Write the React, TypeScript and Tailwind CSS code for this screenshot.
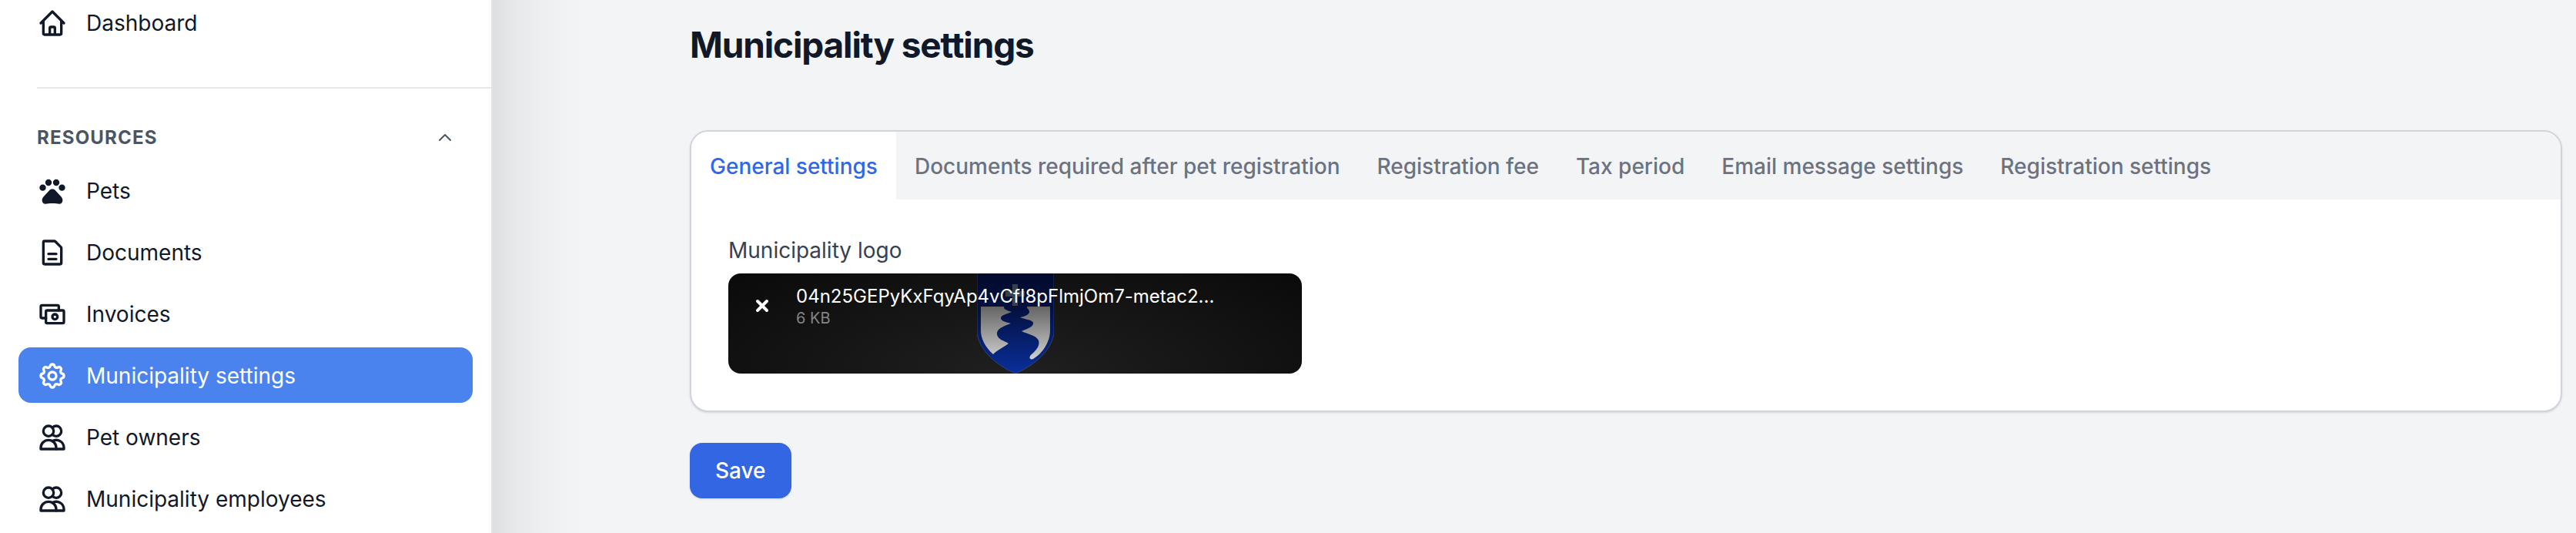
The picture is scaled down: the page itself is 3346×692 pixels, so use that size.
import React from 'react';

type IconProps = { className?: string };

const stroke = {
  viewBox: '0 0 24 24',
  fill: 'none',
  stroke: 'currentColor',
  strokeWidth: 2,
  strokeLinecap: 'round' as const,
  strokeLinejoin: 'round' as const,
  'aria-hidden': true,
};

const HomeIcon: React.FC<IconProps> = ({ className }) => (
  <svg {...stroke} className={className}>
    <path d="M3 12l9-9 9 9M5 10v10a1 1 0 0 0 1 1h12a1 1 0 0 0 1-1V10M10 21v-5a1 1 0 0 1 1-1h2a1 1 0 0 1 1 1v5" />
  </svg>
);

const PawIcon: React.FC<IconProps> = ({ className }) => (
  <svg viewBox="0 0 24 24" fill="currentColor" aria-hidden="true" className={className}>
    <circle cx="4.5" cy="9.4" r="2.5" />
    <circle cx="9" cy="5.4" r="2.5" />
    <circle cx="15" cy="5.4" r="2.5" />
    <circle cx="19.5" cy="9.4" r="2.5" />
    <path d="M12 10.5c1 0 1.8.4 2.5 1.2l4.3 4.6c.9 1 1.2 1.8 1.2 3 0 1.6-1.1 2.7-2.6 2.7-1.5 0-3-.4-5.4-.4s-3.9.4-5.4.4C5.1 22 4 20.9 4 19.3c0-1.2.3-2 1.2-3l4.3-4.6c.7-.8 1.5-1.2 2.5-1.2z" />
  </svg>
);

const DocumentIcon: React.FC<IconProps> = ({ className }) => (
  <svg {...stroke} className={className}>
    <path d="M5 20V4a1 1 0 0 1 1-1h7.59a1 1 0 0 1 .7.29l4.42 4.42a1 1 0 0 1 .29.7V20a1 1 0 0 1-1 1H6a1 1 0 0 1-1-1zM9 13h6M9 17h6" />
  </svg>
);

const MoneyIcon: React.FC<IconProps> = ({ className }) => (
  <svg {...stroke} className={className}>
    <path d="M17 9V6a1 1 0 0 0-1-1H4a1 1 0 0 0-1 1v8a1 1 0 0 0 1 1h3" />
    <rect x="7" y="9" width="14" height="10" rx="1" />
    <circle cx="14" cy="14" r="2" />
  </svg>
);

const CogIcon: React.FC<IconProps> = ({ className }) => (
  <svg {...stroke} className={className}>
    <path d="M10.33 4.32c.42-1.76 2.92-1.76 3.35 0a1.72 1.72 0 0 0 2.57 1.06c1.54-.94 3.31.83 2.37 2.37a1.72 1.72 0 0 0 1.06 2.57c1.76.43 1.76 2.93 0 3.36a1.72 1.72 0 0 0-1.06 2.57c.94 1.54-.83 3.31-2.37 2.37a1.72 1.72 0 0 0-2.57 1.06c-.43 1.76-2.93 1.76-3.35 0a1.72 1.72 0 0 0-2.58-1.06c-1.54.94-3.31-.83-2.37-2.37a1.72 1.72 0 0 0-1.06-2.57c-1.76-.43-1.76-2.93 0-3.36a1.72 1.72 0 0 0 1.06-2.57c-.94-1.54.83-3.31 2.37-2.37 1 .61 2.3.07 2.58-1.06z" />
    <circle cx="12" cy="12" r="3" />
  </svg>
);

const UsersIcon: React.FC<IconProps> = ({ className }) => (
  <svg {...stroke} className={className}>
    <circle cx="9" cy="7" r="4" />
    <path d="M3 20a6 6 0 0 1 12 0v1H3z" />
    <path d="M12 4.35a4 4 0 1 1 0 5.3M15 21h6v-1a6 6 0 0 0-9-5.2" />
  </svg>
);

const Crest: React.FC<IconProps> = ({ className }) => (
  <svg viewBox="0 0 100 130" aria-hidden="true" className={className}>
    <defs>
      <linearGradient id="field" x1="0" y1="0" x2="0" y2="1">
        <stop offset="0" stopColor="#020b2c" />
        <stop offset="0.35" stopColor="#03103f" />
        <stop offset="1" stopColor="#0a2f9c" />
      </linearGradient>
      <linearGradient id="silver" gradientUnits="userSpaceOnUse" x1="0" y1="43" x2="0" y2="112">
        <stop offset="0" stopColor="#646464" />
        <stop offset="1" stopColor="#d0d0d0" />
      </linearGradient>
    </defs>
    <path d="M0-2H100V77C98 97 78 118 50 130 22 118 2 97 0 77Z" fill="url(#field)" stroke="#52628f" strokeOpacity="0.5" />
    <path d="M46 14h7v9h9v7h-9v12h-7V30h-9v-7h9z" fill="#3a4048" />
    <path d="M5 43H35C34 47 40 48 45 50C38 53 31 54 31 58C31 62 38 63 44 65C35 68 25 72 26 79C27 86 35 87 41 91C35 96 25 100 21 105C10 95 5 84 5 74Z" fill="url(#silver)" />
    <path d="M65 43H95V74C95 89 85 104 73 111C68 113 67 108 71 105C78 99 82 93 80 87C77 80 66 79 58 75C65 72 74 69 73 64C72 60 63 60 56 57C62 56 69 53 68 49C67 46 65 46 65 43Z" fill="url(#silver)" />
  </svg>
);

interface NavItem {
  label: string;
  icon: React.FC<IconProps>;
  active?: boolean;
}

const resources: NavItem[] = [
  { label: 'Pets', icon: PawIcon },
  { label: 'Documents', icon: DocumentIcon },
  { label: 'Invoices', icon: MoneyIcon },
  { label: 'Municipality settings', icon: CogIcon, active: true },
  { label: 'Pet owners', icon: UsersIcon },
  { label: 'Municipality employees', icon: UsersIcon },
];

const tabs = [
  'General settings',
  'Documents required after pet registration',
  'Registration fee',
  'Tax period',
  'Email message settings',
  'Registration settings',
];

const NavLink: React.FC<{ item: NavItem }> = ({ item }) => {
  const Icon = item.icon;

  return (
    <a
      href="#"
      aria-current={item.active ? 'page' : undefined}
      className={`flex h-[72px] items-center gap-6 rounded-2xl px-6 pt-0.5 text-[28px] leading-10 ${
        item.active ? 'bg-[#4a83ee] text-white' : 'text-[#111827]'
      }`}
    >
      <Icon className="size-10 shrink-0" />
      <span>{item.label}</span>
    </a>
  );
};

const Sidebar = () => (
  <aside className="w-[640px] shrink-0 overflow-hidden border-r-2 border-[#e3e4e8] bg-white">
    <nav className="-mt-[7px]">
      <div className="px-6">
        <NavLink item={{ label: 'Dashboard', icon: HomeIcon }} />
      </div>
      <hr className="mt-12 ml-12 border-t-2 border-[#e5e7eb]" />
      <button
        type="button"
        aria-expanded="true"
        className="mt-12 flex w-full items-center justify-between px-12 text-[#4b5563]"
      >
        <span className="text-2xl leading-8 font-bold tracking-wider uppercase">Resources</span>
        <svg {...stroke} className="size-6">
          <path d="m5 15 7-7 7 7" />
        </svg>
      </button>
      <ul className="mt-4 flex flex-col gap-2 px-6">
        {resources.map((item) => (
          <li key={item.label}>
            <NavLink item={item} />
          </li>
        ))}
      </ul>
    </nav>
  </aside>
);

const LogoUpload = () => (
  <div className="max-w-[745px]">
    <p className="text-[28px] leading-9 text-[#374151]">Municipality logo</p>
    <div className="relative mt-3 h-[130px] overflow-hidden rounded-2xl bg-[radial-gradient(ellipse_at_bottom,#202020,#0a0a0a)]">
      <Crest className="absolute top-0 left-1/2 h-full -translate-x-1/2" />
      <div className="relative flex items-start gap-4 px-4 py-3.5">
        <button type="button" aria-label="Remove" className="flex size-14 items-center justify-center text-white">
          <svg {...stroke} strokeWidth={4} className="size-6">
            <path d="m6 6 12 12M18 6 6 18" />
          </svg>
        </button>
        <div>
          <p className="text-2xl leading-8 text-white">04n25GEPyKxFqyAp4vCfI8pFlmjOm7-metac2...</p>
          <p className="text-xl leading-6 text-[#848484]">6 KB</p>
        </div>
      </div>
    </div>
  </div>
);

export default function App() {
  return (
    <div className="flex min-h-screen bg-[#f3f4f6] font-[Inter,sans-serif] text-[#111827]">
      <Sidebar />
      <main className="min-w-0 grow bg-[linear-gradient(to_right,rgba(0,0,0,0.085),rgba(0,0,0,0.048)_28px,rgba(0,0,0,0.018)_68px,rgba(0,0,0,0.004)_104px,transparent_130px)] pt-7 pr-[18px] pb-11 pl-64">
        <h1 className="text-[46px] leading-[60px] font-bold tracking-tight">Municipality settings</h1>
        <section className="mt-[81px] overflow-hidden rounded-3xl border-2 border-[#d1d5db] bg-white shadow-sm">
          <div role="tablist" className="flex bg-[#f3f4f6]">
            {tabs.map((tab, i) => (
              <button
                key={tab}
                type="button"
                role="tab"
                aria-selected={i === 0}
                className={`h-[88px] px-6 pt-0.5 text-[28px] leading-10 font-medium whitespace-nowrap ${
                  i === 0 ? 'bg-white text-[#2f67e8]' : 'text-[#6b7280]'
                }`}
              >
                {tab}
              </button>
            ))}
          </div>
          <div className="p-12">
            <LogoUpload />
          </div>
        </section>
        <button
          type="button"
          className="mt-10 h-[72px] rounded-2xl bg-[#3266e3] px-[33px] text-[28px] leading-10 font-medium text-white shadow-sm"
        >
          Save
        </button>
      </main>
    </div>
  );
}
